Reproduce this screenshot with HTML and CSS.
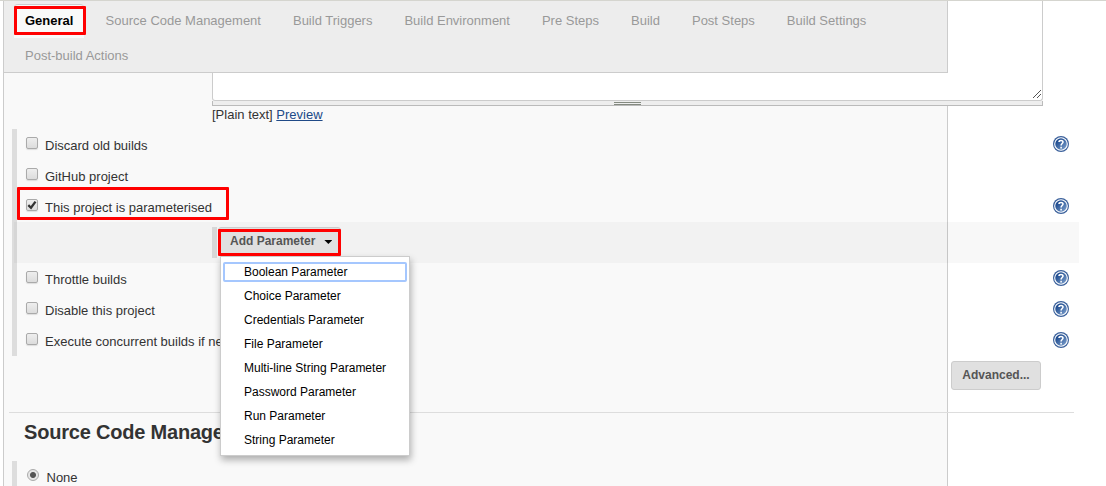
FILE: index.html
```html
<!DOCTYPE html>
<html lang="en">
<head>
<meta charset="utf-8">
<title>Project configuration</title>
<link rel="stylesheet" href="styles.css">
</head>
<body>
<svg class="defs" width="0" height="0" aria-hidden="true">
  <defs>
    <linearGradient id="blue" x1="0" y1="0" x2="1" y2="1">
      <stop offset="0.25" stop-color="#214e91"/><stop offset="1" stop-color="#89aad4"/>
    </linearGradient>
    <symbol id="help" viewBox="0 0 16 16">
      <circle cx="8" cy="8" r="8" fill="#3a609b"/>
      <circle cx="8" cy="8" r="6.3" fill="url(#blue)" stroke="#fff" stroke-width="1.1"/>
      <path d="M6 6C6.1 3.9 10 3.9 10 6C10 7.5 8.1 7.5 8.1 9.4M8.1 10.7v1.8" fill="none" stroke="#fff" stroke-width="1.6"/>
    </symbol>
  </defs>
</svg>
<div class="page">
  <nav class="tabs">
    <span class="tab active">General</span>
    <span class="tab">Source Code Management</span>
    <span class="tab">Build Triggers</span>
    <span class="tab">Build Environment</span>
    <span class="tab">Pre Steps</span>
    <span class="tab">Build</span>
    <span class="tab">Post Steps</span>
    <span class="tab">Build Settings</span>
    <span class="tab">Post-build Actions</span>
  </nav>
  <main class="panel">
    <section class="description">
      <div class="editor">
        <svg class="grip" width="9" height="9" viewBox="0 0 9 9" shape-rendering="crispEdges"><path d="M0.5 8.5L8.5 .5M4.5 8.5L8.5 4.5" stroke="#555" fill="none"/></svg>
      </div>
      <div class="handle"><span class="handle-lines"></span></div>
      <div class="format">[Plain text] <a class="preview">Preview</a></div>
    </section>
    <section class="options">
      <div class="row"><span class="check"></span><span class="label">Discard old builds</span><svg class="help"><use href="#help"/></svg></div>
      <div class="row"><span class="check"></span><span class="label">GitHub project</span></div>
      <div class="row"><span class="check"><svg class="tick" width="10" height="10" viewBox="0 0 10 10"><path d="M1.3 5.2L4 7.8L8.5 1.6" fill="none" stroke="#333" stroke-width="2.3"/></svg></span><span class="label">This project is parameterised</span><svg class="help"><use href="#help"/></svg></div>
      <div class="nested">
        <div class="nested-bar"></div>
        <div class="dropdown">
          <div class="add-button">Add Parameter<span class="caret"></span></div>
          <div class="menu">
            <div class="item focused">Boolean Parameter</div>
            <div class="item">Choice Parameter</div>
            <div class="item">Credentials Parameter</div>
            <div class="item">File Parameter</div>
            <div class="item">Multi-line String Parameter</div>
            <div class="item">Password Parameter</div>
            <div class="item">Run Parameter</div>
            <div class="item">String Parameter</div>
          </div>
        </div>
      </div>
      <div class="row"><span class="check"></span><span class="label">Throttle builds</span><svg class="help"><use href="#help"/></svg></div>
      <div class="row"><span class="check"></span><span class="label">Disable this project</span><svg class="help"><use href="#help"/></svg></div>
      <div class="row"><span class="check"></span><span class="label">Execute concurrent builds if necessary</span><svg class="help"><use href="#help"/></svg></div>
    </section>
    <div class="advanced">Advanced...</div>
    <section class="scm">
      <h2 class="heading">Source Code Management</h2>
      <div class="scm-options"><span class="radio"></span><span class="label none">None</span></div>
    </section>
  </main>
  <div class="mark mark-general"></div>
  <div class="mark mark-project"></div>
  <div class="mark mark-add"></div>
</div>
</body>
</html>
```

FILE: styles.css
```css
* { box-sizing: border-box; }
body { margin: 0; background: #fff; color: #333; font: 13px/16px "Liberation Sans", Arial, sans-serif; }
.defs { position: absolute; }
.page { position: relative; width: 1106px; height: 486px; overflow: hidden; border-top: 1px solid #d5d5cf; }
.panel { width: 945px; height: 485px; margin-left: 3px; background: #f9f9f9; border: solid #ccc; border-width: 0 1px; }

.tabs { position: absolute; z-index: 2; left: 3px; top: 0; width: 945px; height: 72px; padding: 3px 0 0 10px; display: flex; flex-wrap: wrap; align-content: flex-start; background: #ededed; border: solid #ccc; border-width: 0 1px 1px; color: #999; }
.tab { height: 35px; padding: 9px 16px 0; white-space: nowrap; }
.active { width: 70px; height: 34px; margin-right: 5.6px; padding: 8px 0 0 11px; background: #f9f9f9; border-top: 1px solid #ccc; border-radius: 4px 4px 0 0; color: #000; font-weight: bold; }
.tab:last-child { padding-left: 11px; }

.description { width: 831px; height: 128px; margin-left: 208px; }
.editor { height: 100px; background: #fff; border: 1px solid #ccc; border-top: 0; border-radius: 0 0 3px 3px; display: flex; justify-content: flex-end; align-items: flex-end; padding: 0 1px 1px 0; }
.handle { height: 5px; background: #eee; border: solid #bbb; border-width: 0 1px 1px; display: flex; justify-content: center; padding-top: 1px; }
.handle-lines { width: 27px; height: 3px; border: solid #848a80; border-width: 1px 0; }
.format { padding-top: 1px; height: 22px; }
.preview { color: #204a87; text-decoration: underline; }

.options { width: 1067px; margin-left: 8px; border-left: 5px solid #ddd; }
.row { height: 31px; display: flex; align-items: flex-start; padding: 9px 10px 0 9px; }
.check { width: 12px; height: 12px; margin-right: 7px; border: 1px solid #aaa; border-radius: 2px; background: linear-gradient(#eee, #dcdcdc); box-shadow: 0 1px 1px #ddd; flex: none; margin-top: -1px; }
.tick { display: block; }
.label { white-space: nowrap; }
.help { width: 16px; height: 16px; margin: -2px 0 0 auto; flex: none; }
.nested { height: 41px; margin-left: -3px; padding-left: 198px; background: rgba(0, 0, 0, .028); display: flex; align-items: flex-start; padding-top: 5px; }
.nested-bar { width: 5px; height: 31px; background: #d7d7d7; }
.dropdown { position: relative; margin-left: 1px; }
.add-button { width: 123px; height: 29px; padding: 6px 0 0 11px; display: flex; background: #e0e0e0; border: 1px solid #ccc; border-radius: 3px; font-size: 12px; line-height: 15px; font-weight: bold; color: #555; white-space: nowrap; }
.caret { margin: 6px 0 0 9px; width: 8px; height: 4px; background: #000; clip-path: polygon(0 0, 100% 0, 50% 100%); }
.menu { position: absolute; z-index: 3; left: 2px; top: 29px; width: 190px; height: 200px; padding: 5px 2px; background: #fff; border: 1px solid #ccc; box-shadow: 1px 4px 7px rgba(0, 0, 0, .3); color: #000; font-size: 12px; line-height: 16px; }
.item { height: 20px; margin-bottom: 4px; padding: 2px 0 0 21px; white-space: nowrap; }
.focused { border: 2px solid #a5c7fe; border-radius: 2px; padding: 0 0 0 19px; }
.advanced { width: 90px; height: 29px; margin: 5px 0 0 947px; background: #e0e0e0; border: 1px solid #ccc; border-radius: 3px; color: #555; font-size: 12px; font-weight: bold; line-height: 27px; text-align: center; }
.scm { width: 1065px; margin: 22px 0 0 5px; border-top: 1px solid #ddd; }
.heading { margin: 0; padding: 7px 0 0 15px; height: 48px; font-size: 20px; line-height: 24px; letter-spacing: -.2px; white-space: nowrap; }
.scm-options { height: 25px; margin-left: 3px; border-left: 5px solid #ddd; display: flex; align-items: flex-start; padding: 8px 0 0 10px; }
.radio { width: 12px; height: 12px; margin-right: 7.5px; border: 1px solid #aaa; border-radius: 50%; background: radial-gradient(circle, #555 2.5px, #e6e6e6 3.5px); }
.none { padding-top: 1px; }

.mark { position: absolute; z-index: 4; border: 3px solid #f00; border-radius: 1px; }
.mark-general { left: 14px; top: 5px; width: 72px; height: 29px; }
.mark-project { left: 17px; top: 186px; width: 212px; height: 33px; }
.mark-add { left: 218px; top: 228px; width: 123px; height: 27px; }
```
